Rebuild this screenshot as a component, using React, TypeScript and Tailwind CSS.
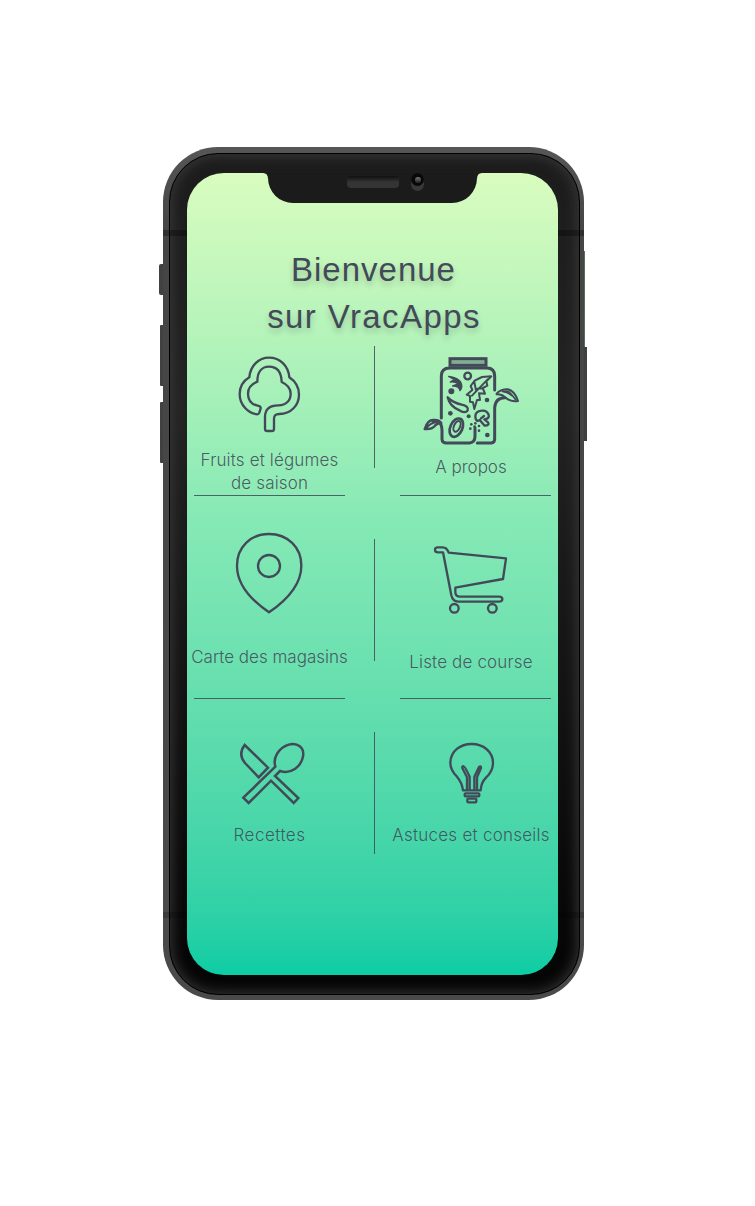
import type { ReactNode } from "react";

const stroke = {
  fill: "none",
  stroke: "#424a59",
  strokeLinecap: "round" as const,
  strokeLinejoin: "round" as const,
};

function TreeIcon() {
  return (
    <svg width="90" height="95" viewBox="0 0 270 285" {...stroke} strokeWidth="7">
      <path d="M97 208C70 206 44 180 44 148C44 126 56 107 73 97C76 62 101 38 132 38C165 38 190 62 193 97C211 109 222 127 222 149C222 180 198 207 163 207C151 207 147 211 147 222V251Q147 258 140 258H127Q120 258 120 251V216C120 192 136 181 160 181C184 181 197 166 197 146C197 130 188 119 170 111C169 83 158 65 132 65C108 65 97 84 97 110C79 117 69 129 69 146C69 165 80 178 98 182Q108 184 107 190L103 203Q101 208 97 208Z" />
    </svg>
  );
}

function JarIcon() {
  return (
    <svg width="115" height="110" viewBox="-3 0 345 330" {...stroke} strokeWidth="9">
      <rect x="105" y="41" width="108" height="20" strokeLinejoin="miter" fill="#424a59" fillOpacity=".4" />
      <path d="M79 219V93Q79 69 104 69H216Q239 69 239 93V135" />
      <path d="M54 229Q80 223 81 256V283Q82 294 94 294H164Q180 292 180 274V248" />
      <path d="M187 294H229Q239 293 239 282V188Q241 158 270 158" />
      <path d="M245 146Q255 133 278 133Q298 136 309 168Q287 172 270 157Q260 147 245 148" strokeWidth="6" />
      <path d="M262 139Q288 143 302 164Q290 147 280 139Z" fill="#424a59" strokeWidth="5" />
      <path d="M29 252Q38 223 57 225Q71 224 79 234Q66 233 59 243Q50 254 29 252ZM35 248Q44 236 62 231" strokeWidth="7" />
      <circle cx="158" cy="93" r="10" strokeWidth="7" />
      <path d="M101 94Q132 97 139 116Q143 128 135 137Q132 122 113 123L130 117Q118 108 106 111Q115 103 122 106Z" fill="#424a59" strokeWidth="4" />
      <path d="M229 94L201 96L179 107L167 123L172 135L155 149L165 153L165 170L174 172L178 192L186 165L195 165L192 145L210 146L203 129L217 122L214 109ZM171 152L218 103M183 136L178 111M187 131L202 130" strokeWidth="6" />
      <path d="M98 157Q104 185 135 197Q152 206 158 196Q162 184 140 179Q114 173 98 157Z" strokeWidth="7" />
      <path d="M181 216Q180 199 200 197Q215 195 221 209Q224 221 208 223L219 232Q225 241 209 242L194 225Q183 232 181 216ZM198 220L207 213" strokeWidth="7" />
      <ellipse cx="124" cy="248" rx="18" ry="29" transform="rotate(24 124 248)" strokeWidth="8" />
      <ellipse cx="126" cy="244" rx="9" ry="17" transform="rotate(24 126 244)" strokeWidth="6" />
      <g fill="#424a59" stroke="none">
        <circle cx="109" cy="139" r="9" />
        <circle cx="216" cy="165" r="7" />
        <circle cx="106" cy="205" r="7" />
        <circle cx="161" cy="214" r="6" />
        <circle cx="217" cy="270" r="7" />
        <circle cx="169" cy="238" r="4" />
        <circle cx="181" cy="235" r="4" />
        <circle cx="192" cy="243" r="4" />
        <circle cx="166" cy="251" r="4" />
        <circle cx="179" cy="245" r="4" />
        <circle cx="192" cy="257" r="4" />
      </g>
    </svg>
  );
}

function PinIcon() {
  return (
    <svg width="90" height="95" viewBox="0 0 270 285" {...stroke} strokeWidth="7">
      <path d="M132 262C84 229 36 181 36 122C36 66 77 27 132 27C188 27 229 67 229 122C229 181 180 229 132 262Z" />
      <circle cx="132" cy="123" r="33" />
    </svg>
  );
}

function CartIcon() {
  return (
    <svg width="95" height="85" viewBox="-3 0 285 255" {...stroke} strokeWidth="7">
      <path d="M54 52H40Q30 52 30 44Q30 37 38 37H53Q66 37 71 53L243 70L234 132L91 158V172Q92 185 105 185H222Q232 185 232 192Q232 200 222 200H99Q83 199 79 181Z" />
      <circle cx="88" cy="220" r="13" />
      <circle cx="202" cy="220" r="13" />
    </svg>
  );
}

function CutleryIcon() {
  return (
    <svg width="85" height="75" viewBox="-8 0 255 225" {...stroke} strokeWidth="7.5" strokeLinejoin="miter">
      <path d="M45 30L115 98L87 127L46 84Q24 58 45 30Z" />
      <path d="M41 188L137 95C129 69 146 39 177 29C203 21 225 38 220 64C215 94 186 119 151 108L136 123L206 189L192 204L124 137L57 204Z" />
    </svg>
  );
}

function BulbIcon() {
  return (
    <svg width="75" height="75" viewBox="-3 0 225 225" {...stroke} strokeWidth="7">
      <path d="M84 166C82 148 77 138 66 125C52 111 46 98 46 83C47 48 76 27 110 27C145 27 174 50 174 84C174 102 166 116 153 128C141 140 138 149 137 166Z" />
      <path d="M96 164V127L82 99Q81 93 86 94Q90 94 104 125V164M118 164V125L132 96Q139 92 138 99L126 127V164" strokeWidth="7" />
      <rect x="89" y="175" width="44" height="9" rx="3" />
      <rect x="97" y="191" width="27" height="11" rx="3" />
    </svg>
  );
}

function Tile({ icon, label, className }: { icon: ReactNode; label: ReactNode; className: string }) {
  return (
    <button type="button" className={`flex flex-col items-center text-center text-[17px] leading-[23px] font-light whitespace-nowrap text-[#424a59]/90 ${className}`}>
      {icon}
      <span>{label}</span>
    </button>
  );
}

function Row({ className, children }: { className: string; children: [ReactNode, ReactNode] }) {
  return (
    <div className={`grid grid-cols-[165px_37px_164px] items-start ${className}`}>
      {children[0]}
      <div className="flex justify-center pl-2">
        <div className="h-[122px] w-px bg-[#424a59]/85" />
      </div>
      {children[1]}
    </div>
  );
}

function Rule() {
  return (
    <div className="flex justify-between px-[7px]">
      <div className="h-px w-[151px] bg-[#424a59]/85" />
      <div className="h-px w-[151px] bg-[#424a59]/85" />
    </div>
  );
}

function Notch() {
  return (
    <div className="flex h-[30px] items-start justify-center">
      <svg width="5" height="6" viewBox="0 0 5 6" fill="#1b1b1b">
        <path d="M0 0H5V6Q5 0 0 0Z" />
      </svg>
      <div className="flex h-[29.5px] w-[209px] items-start rounded-b-[25px] bg-[#1b1b1b] pl-[79px]">
        <div className="mt-[3px] h-3 w-[52px] rounded-[4px] bg-linear-to-b from-[#101010] to-[#343434] to-50%" />
        <div className="ml-3 flex h-[18px] w-[13px] items-start rounded-full bg-[#383838]">
          <div className="flex size-[13px] items-center justify-center rounded-full bg-[#080808]">
            <div className="size-[6px] rounded-full bg-linear-to-b from-[#777] to-[#222]" />
          </div>
        </div>
      </div>
      <svg width="5" height="6" viewBox="0 0 5 6" fill="#1b1b1b">
        <path d="M5 0H0V6Q0 0 5 0Z" />
      </svg>
    </div>
  );
}

export default function App() {
  return (
    <div className="flex h-[1206px] w-[755px] items-start overflow-hidden bg-white pt-[147px] pl-[159px] font-['Inter','Liberation_Sans',sans-serif]">
      <div className="flex w-1 flex-col items-end pt-[117px]">
        <div className="h-[31px] w-1 rounded-l-[2px] bg-[#414141]" />
        <div className="mt-[30px] h-[61px] w-[3px] rounded-l-[1px] bg-[#414141]" />
        <div className="mt-4 h-[61px] w-[3px] rounded-l-[1px] bg-[#414141]" />
      </div>

      <div className="relative h-[853px] w-[421px] overflow-hidden rounded-[55px] bg-linear-to-b from-[#565656] via-[#454545] via-10% to-[#4a4a4a] pt-[6px] pr-[4px] pb-[5px] pl-[6px]">
        <div className="absolute inset-x-0 top-[83px] h-[6px] bg-black/30" />
        <div className="absolute inset-x-0 bottom-[82px] h-[6px] bg-black/20" />
        <div className="h-full rounded-[49px] border border-black bg-linear-to-b from-[#1c1c1c] via-[#232323] via-30% to-[#050505] pt-[19px] pb-[19px] pl-[17px] shadow-[inset_0_0_14px_1px_#3b3b3b]">
          <div className="relative flex h-[802px] w-[371px] flex-col rounded-[37px] bg-linear-to-b from-[#d9fcbf] via-[#84e9b5] via-[44%] to-[#0acda4]">
            <Notch />

            <h1 className="pt-[43px] pb-[6px] text-center font-['Liberation_Sans',Arial,sans-serif] text-[33px] leading-[47px] text-[#424a59] [text-shadow:0_4px_6px_rgba(0,0,0,0.2)]">
              <span className="block pl-[2px] tracking-[1px]">Bienvenue</span>
              <span className="block pl-[3px] tracking-[1.4px]">sur VracApps</span>
            </h1>

            <Row className="h-[149px]">
              <Tile className="-mt-px gap-[9px]" icon={<TreeIcon />} label={<span className="tracking-[0.15px]">Fruits et légumes<br />de saison</span>} />
              <Tile className="-mt-px gap-px" icon={<JarIcon />} label="A propos" />
            </Row>
            <Rule />
            <Row className="h-[202px] pt-[43px]">
              <Tile className="-mt-[14px] gap-[26px]" icon={<PinIcon />} label="Carte des magasins" />
              <Tile className="-mt-1 gap-[31px] tracking-[0.15px]" icon={<CartIcon />} label="Liste de course" />
            </Row>
            <Rule />
            <Row className="h-[156px] pt-[33px]">
              <Tile className="gap-[14px] pt-[3px] tracking-[0.5px]" icon={<CutleryIcon />} label="Recettes" />
              <Tile className="gap-[14px] pt-[3px] tracking-[0.25px]" icon={<BulbIcon />} label="Astuces et conseils" />
            </Row>
          </div>
        </div>
      </div>

      <div className="flex w-1 flex-col items-start pt-[104px]">
        <div className="h-[96px] w-px bg-[#56705c]" />
        <div className="h-[94px] w-[3px] bg-[#414141]" />
      </div>
    </div>
  );
}
